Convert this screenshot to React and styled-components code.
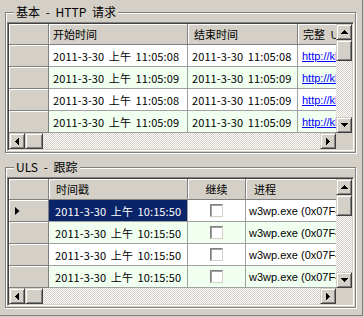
import styled, { createGlobalStyle } from "styled-components";

const GlobalStyle = createGlobalStyle`
  html, body {
    margin: 0;
    padding: 0;
    background: #d4d0c8;
  }
  body {
    font-family: "Noto Sans CJK SC", "Noto Sans", sans-serif;
    color: #000;
  }
`;

const Window = styled.div`
  box-sizing: border-box;
  width: 363px;
  height: 316px;
  padding: 12px 0 0 5px;
  background: #d4d0c8;
  border-right: 1px solid #808080;
  border-bottom: 1px solid #808080;
  display: flex;
  flex-direction: column;
  gap: 14px;
`;

const GroupBox = styled.section`
  position: relative;
  box-sizing: border-box;
  width: 351px;
  height: 141px;
  padding: 9px 1px 1px 1px;
  border: 1px solid #808080;
  box-shadow: inset 1px 1px 0 #fff, 1px 1px 0 #fff;
`;

const Legend = styled.span`
  position: absolute;
  top: -8px;
  left: 8px;
  padding: 0 2px;
  background: #d4d0c8;
  font-size: 12px;
  line-height: 14px;
  word-spacing: 3px;
  white-space: pre;
`;

const Grid = styled.div`
  box-sizing: border-box;
  width: 347px;
  height: 129px;
  padding: 1px;
  border: 1px solid;
  border-color: #808080 #fff #fff #808080;
  box-shadow: inset 1px 1px 0 #404040, inset -1px -1px 0 #d4d0c8;
  display: grid;
  grid-template-columns: 1fr 16px;
  grid-template-rows: 1fr 16px;
  background: #d4d0c8;
`;

const Viewport = styled.div`
  overflow: hidden;
  background: #d4d0c8;
`;

const Row = styled.div`
  display: flex;
  height: ${(p) => (p.header ? 21 : 22)}px;
`;

const RowHeader = styled.div`
  box-sizing: border-box;
  flex: 0 0 40px;
  display: flex;
  align-items: center;
  padding-left: 6px;
  background: #d4d0c8;
  border-right: 1px solid #808080;
  border-bottom: 1px solid #808080;
  box-shadow: inset 1px 1px 0 #fff;
`;

const HeaderCell = styled.div`
  box-sizing: border-box;
  flex: 0 0 ${(p) => p.width}px;
  display: flex;
  align-items: center;
  justify-content: ${(p) => (p.center ? "center" : "flex-start")};
  padding-left: ${(p) => (p.center ? 0 : p.pad)}px;
  background: #d4d0c8;
  border-right: 1px solid #808080;
  border-bottom: 1px solid #808080;
  box-shadow: inset 1px 1px 0 #fff;
  font-size: 11px;
  word-spacing: 3px;
  white-space: pre;
  overflow: hidden;
`;

const Cell = styled.div`
  box-sizing: border-box;
  flex: 0 0 ${(p) => p.width}px;
  display: flex;
  align-items: center;
  justify-content: ${(p) => (p.center ? "center" : "flex-start")};
  padding-left: ${(p) => (p.center ? 0 : p.pad)}px;
  background: ${(p) => (p.selected ? "#0a246a" : p.alt ? "#f0fff0" : "#fff")};
  color: ${(p) => (p.selected ? "#fff" : "#000")};
  border-right: 1px solid #a0a0a0;
  border-bottom: 1px solid #a0a0a0;
  font-size: 11px;
  letter-spacing: 0.1px;
  word-spacing: 2px;
  white-space: pre;
  overflow: hidden;
`;

const Latin = styled.span`
  font-family: "Liberation Sans", Arial, sans-serif;
  font-size: 11px;
  letter-spacing: 0;
  word-spacing: 0;
`;

const Link = styled.a`
  font-family: "Liberation Sans", Arial, sans-serif;
  font-size: 11px;
  letter-spacing: 0;
  word-spacing: 0;
  color: #0000ff;
  text-decoration: underline;
`;

const CheckBox = styled.span`
  box-sizing: border-box;
  width: 13px;
  height: 13px;
  background: #fff;
  border: 1px solid;
  border-color: #808080 #d4d0c8 #d4d0c8 #808080;
  box-shadow: inset 1px 1px 0 #a0a0a0;
`;

const VScroll = styled.div`
  display: flex;
  flex-direction: column;
`;

const HScroll = styled.div`
  display: flex;
`;

const Track = styled.div`
  flex: 1;
  background: repeating-conic-gradient(#d4d0c8 0 25%, #fff 0 50%) 0 0 / 2px 2px;
`;

const ScrollButton = styled.div`
  box-sizing: border-box;
  flex: 0 0 ${(p) => p.size || 16}px;
  width: ${(p) => (p.horizontal ? `${p.size || 16}px` : "16px")};
  height: ${(p) => (p.horizontal ? "16px" : `${p.size || 16}px`)};
  display: flex;
  align-items: center;
  justify-content: center;
  background: #d4d0c8;
  border: 1px solid;
  border-color: #d4d0c8 #404040 #404040 #d4d0c8;
  box-shadow: inset 1px 1px 0 #fff, inset -1px -1px 0 #808080;
`;

const Corner = styled.div`
  background: #d4d0c8;
`;

const arrowPoints = {
  up: "3.5,0 7,4 0,4",
  down: "0,0 7,0 3.5,4",
  left: "4,0 4,7 0,3.5",
  right: "0,0 4,3.5 0,7",
};

const Arrow = ({ dir }) => {
  const vertical = dir === "up" || dir === "down";
  const w = vertical ? 7 : 4;
  const h = vertical ? 4 : 7;
  return (
    <svg width={w} height={h} viewBox={`0 0 ${w} ${h}`} shapeRendering="crispEdges">
      <polygon points={arrowPoints[dir]} fill="#000" />
    </svg>
  );
};

const RowPointer = () => (
  <svg width="5" height="8" viewBox="0 0 5 8">
    <polygon points="0,0 4.5,4 0,8" fill="#000" />
  </svg>
);

const renderCell = (col, value) => {
  if (col.type === "check") return <CheckBox />;
  if (col.type === "link") return <Link>{value}</Link>;
  if (col.type === "latin") return <Latin>{value}</Latin>;
  return value;
};

const DataGrid = ({ columns, rows, current, thumb }) => (
  <Grid>
    <Viewport>
      <Row header>
        <RowHeader />
        {columns.map((col) => (
          <HeaderCell key={col.title} width={col.width} pad={col.hpad} center={col.center}>
            {col.title}
          </HeaderCell>
        ))}
      </Row>
      {rows.map((row, i) => (
        <Row key={i}>
          <RowHeader>{current === i && <RowPointer />}</RowHeader>
          {columns.map((col, j) => (
            <Cell
              key={col.title}
              width={col.width}
              pad={col.pad}
              center={col.center}
              alt={i % 2 === 1}
              selected={current === i && j === 0}
            >
              {renderCell(col, row[j])}
            </Cell>
          ))}
        </Row>
      ))}
    </Viewport>
    <VScroll>
      <ScrollButton>
        <Arrow dir="up" />
      </ScrollButton>
      <ScrollButton size={thumb.v} />
      <Track />
      <ScrollButton>
        <Arrow dir="down" />
      </ScrollButton>
    </VScroll>
    <HScroll>
      <ScrollButton horizontal>
        <Arrow dir="left" />
      </ScrollButton>
      <ScrollButton horizontal size={thumb.h} />
      <Track />
      <ScrollButton horizontal>
        <Arrow dir="right" />
      </ScrollButton>
    </HScroll>
    <Corner />
  </Grid>
);

const httpColumns = [
  { title: "开始时间", width: 139, hpad: 4, pad: 4 },
  { title: "结束时间", width: 110, hpad: 6, pad: 4 },
  { title: "完整 URL", width: 140, hpad: 5, pad: 4, type: "link" },
];

const httpRows = [
  ["2011-3-30 上午 11:05:08", "2011-3-30 11:05:08", "http://kb/"],
  ["2011-3-30 上午 11:05:09", "2011-3-30 11:05:09", "http://kb/"],
  ["2011-3-30 上午 11:05:08", "2011-3-30 11:05:09", "http://kb/"],
  ["2011-3-30 上午 11:05:09", "2011-3-30 11:05:09", "http://kb/"],
];

const ulsColumns = [
  { title: "时间戳", width: 139, hpad: 7, pad: 6 },
  { title: "继续", width: 58, center: true, type: "check" },
  { title: "进程", width: 160, hpad: 8, pad: 3, type: "latin" },
];

const ulsRows = Array.from({ length: 4 }, () => [
  "2011-3-30 上午 10:15:50",
  false,
  "w3wp.exe (0x07F4)",
]);

const App = () => (
  <>
    <GlobalStyle />
    <Window>
      <GroupBox>
        <Legend>基本 - HTTP 请求</Legend>
        <DataGrid columns={httpColumns} rows={httpRows} thumb={{ v: 21, h: 18 }} />
      </GroupBox>
      <GroupBox>
        <Legend>ULS - 跟踪</Legend>
        <DataGrid columns={ulsColumns} rows={ulsRows} current={0} thumb={{ v: 21, h: 18 }} />
      </GroupBox>
    </Window>
  </>
);

export default App;
